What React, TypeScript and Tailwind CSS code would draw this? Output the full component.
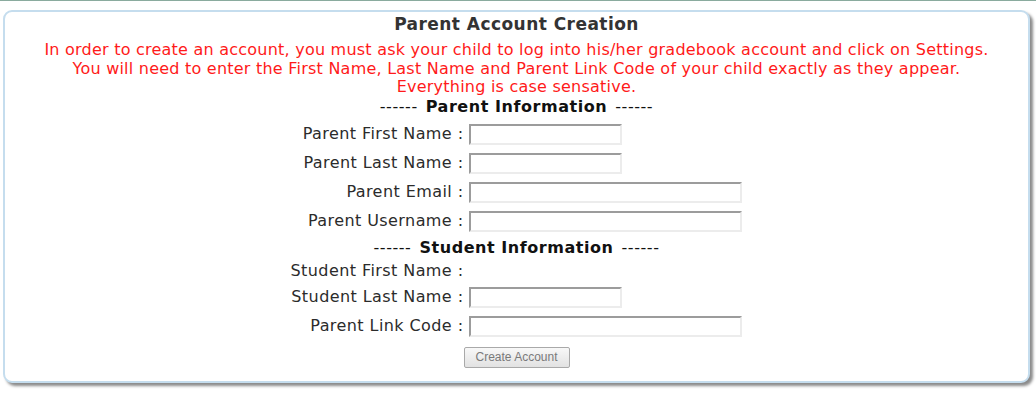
import React from "react";

const inputCls =
  "h-[21px] border-2 border-t-[#9c9c9c] border-l-[#9c9c9c] border-r-[#ececec] border-b-[#ececec] bg-white outline-none";

type Row = { label: string; input?: "short" | "long" };

const parentRows: Row[] = [
  { label: "Parent First Name :", input: "short" },
  { label: "Parent Last Name :", input: "short" },
  { label: "Parent Email :", input: "long" },
  { label: "Parent Username :", input: "long" },
];

const FieldRow = ({ row, h = "h-[29px]" }: { row: Row; h?: string }) => (
  <>
    <div className={`${h} flex items-center justify-end pr-[6px] tracking-[0.42px]`}>{row.label}</div>
    <div className={`${h} flex items-center`}>
      {row.input === "short" && <input type="text" className={`${inputCls} w-[153px]`} />}
      {row.input === "long" && <input type="text" className={`${inputCls} w-[273px]`} />}
    </div>
  </>
);

const SectionHeader = ({ title, h }: { title: string; h: string }) => (
  <div className={`${h} col-span-2 flex items-center justify-center text-[16px] text-[#111] tracking-[0.55px]`}>
    ------ <span className="font-bold mx-[8px]">{title}</span> ------
  </div>
);

export default function App() {
  return (
    <div
      className="min-h-[400px] bg-white border-t border-[#8aab9e]"
      style={{ fontFamily: '"DejaVu Sans", Verdana, sans-serif' }}
    >
      <div className="ml-[3px] mr-[6px] mt-[9px] rounded-[9px] border-2 border-[#c5ddee] bg-white shadow-[3px_3px_3px_#8a8a8a] pb-[13px]">
        <h1 className="h-[26px] flex items-center justify-center text-[17px] font-bold text-[#333] tracking-[0.45px]">
          Parent Account Creation
        </h1>
        <p className="mt-[3px] text-center text-[16px] leading-[18.5px] text-[#ff1a1a] tracking-[0.23px]">
          In order to create an account, you must ask your child to log into his/her gradebook account and click on Settings.
          <br />
          You will need to enter the First Name, Last Name and Parent Link Code of your child exactly as they appear.
          <br />
          Everything is case sensative.
        </p>
        <div className="flex justify-center">
          <div className="grid grid-cols-[auto_auto] text-[16px] text-[#2b2b2b]">
            <SectionHeader title="Parent Information" h="h-[23px] pb-[2px]" />
            {parentRows.map((r) => (
              <FieldRow key={r.label} row={r} />
            ))}
            <SectionHeader title="Student Information" h="h-[25px]" />
            <FieldRow row={{ label: "Student First Name :" }} h="h-[20px]" />
            <div className="h-[2px]" />
            <div className="h-[2px]" />
            <FieldRow row={{ label: "Student Last Name :", input: "short" }} />
            <FieldRow row={{ label: "Parent Link Code :", input: "long" }} />
          </div>
        </div>
        <div className="mt-[6px] flex justify-center">
          <button
            type="button"
            className="h-[21px] w-[106px] rounded-[2px] border border-[#a9a9a9] bg-gradient-to-b from-[#f8f8f8] to-[#e2e2e2] text-[12px] text-[#7a7a7a]"
            style={{ fontFamily: '"Liberation Sans", Arial, sans-serif' }}
          >
            Create Account
          </button>
        </div>
      </div>
    </div>
  );
}
